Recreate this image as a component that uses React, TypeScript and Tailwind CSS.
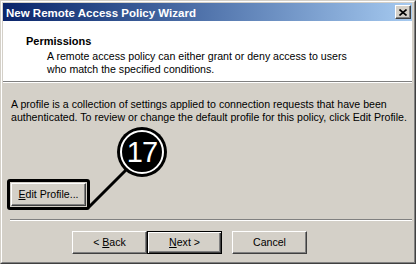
export default function App() {
  const btn =
    "w-[75px] h-[23px] flex items-center justify-center text-[10.6px] bg-[#d4d0c8] border border-t-white border-l-white border-r-[#404040] border-b-[#404040] shadow-[inset_-1px_-1px_0_#808080]";

  return (
    <div className="relative w-[416px] h-[264px] bg-[#d4d0c8] border border-t-[#d4d0c8] border-l-[#d4d0c8] border-r-[#404040] border-b-[#404040] font-['Liberation_Sans',Arial,sans-serif] text-black overflow-hidden">
      <div className="h-full flex flex-col border border-t-white border-l-white border-r-[#808080] border-b-[#808080] pt-px pl-px pr-[2px] pb-px">
        {/* title bar */}
        <div className="h-[18px] shrink-0 flex items-center justify-between bg-linear-to-r from-[#0a246a] to-[#a6caf0] pl-[3px] pr-px">
          <span className="text-white font-bold text-[11.5px] leading-[18px] pt-px">New Remote Access Policy Wizard</span>
          <div className="w-[16px] h-[14px] flex items-center justify-center bg-[#d4d0c8] border border-t-white border-l-white border-r-[#404040] border-b-[#404040] shadow-[inset_-1px_-1px_0_#808080]">
            <svg width="8" height="7" viewBox="0 0 8 7">
              <path d="M0.5 0.5 L7.5 6.5 M7.5 0.5 L0.5 6.5" stroke="black" strokeWidth="1.6" />
            </svg>
          </div>
        </div>

        {/* header */}
        <div className="h-[60px] shrink-0 bg-white pl-[23px] pt-[14px]">
          <div className="font-bold text-[11px] leading-[13px]">Permissions</div>
          <div className="pl-[21px] mt-[2px] text-[10.6px] leading-[13px] whitespace-nowrap">
            A remote access policy can either grant or deny access to users
            <br />
            who match the specified conditions.
          </div>
        </div>
        <div className="h-[2px] shrink-0 border-t border-t-[#808080] border-b border-b-white" />

        {/* body */}
        <div className="flex-1 flex flex-col">
          <div className="pl-[8px] pt-[15px] text-[10.6px] leading-[13px] whitespace-nowrap">
            A profile is a collection of settings applied to connection requests that have been
            <br />
            authenticated. To review or change the default profile for this policy, click Edit Profile.
          </div>

          <div className="mt-[55px] ml-[4px] w-fit border-[3px] border-black rounded-[3px] p-px">
            <div className={btn}>
              <span>
                <u className="underline-offset-1">E</u>dit Profile...
              </span>
            </div>
          </div>

          <div className="mt-[9px] ml-[7px] h-[2px] border-t border-t-[#808080] border-b border-b-white" />

          <div className="mt-[10px] ml-[69px] flex">
            <div className={btn}>
              <span>
                &lt; <u className="underline-offset-1">B</u>ack
              </span>
            </div>
            <div className="w-[75px] h-[23px] flex items-center justify-center text-[10.6px] bg-[#d4d0c8] border border-black shadow-[inset_1px_1px_0_#fff,inset_-1px_-1px_0_#404040,inset_-2px_-2px_0_#808080]">
              <span>
                <u className="underline-offset-1">N</u>ext &gt;
              </span>
            </div>
            <div className={`${btn} ml-[10px]`}>
              <span>Cancel</span>
            </div>
          </div>
        </div>
      </div>

      {/* callout annotation */}
      <div className="absolute left-[-1px] top-[-1px] w-[416px] h-[264px] pointer-events-none">
        <svg className="absolute left-0 top-0" width="416" height="264">
          <line x1="89" y1="207" x2="126" y2="170" stroke="black" strokeWidth="3" />
        </svg>
        <div className="absolute left-[117px] top-[127px] w-[50px] h-[50px] rounded-full bg-black flex items-center justify-center">
          <div className="absolute inset-[3px] rounded-full border-2 border-white" />
          <span className="text-white text-[29px] leading-none tracking-[-1px] font-['Liberation_Sans',Arial,sans-serif]">17</span>
        </div>
      </div>
    </div>
  );
}
